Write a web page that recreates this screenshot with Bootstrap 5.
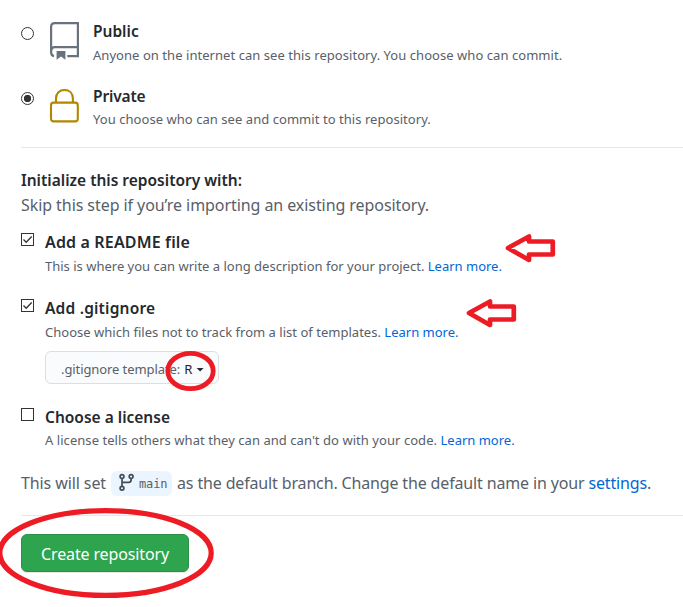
<!DOCTYPE html>
<html lang="en">
<head>
<meta charset="utf-8">
<meta name="viewport" content="width=device-width, initial-scale=1">
<title>Create repository</title>
<link href="https://cdn.jsdelivr.net/npm/bootstrap@5.3.0/dist/css/bootstrap.min.css" rel="stylesheet">
<script src="https://cdn.jsdelivr.net/npm/bootstrap@5.3.0/dist/js/bootstrap.bundle.min.js" defer></script>
<style>
body{font-family:"Noto Sans","Open Sans",sans-serif;font-size:16px;line-height:24px;color:#586069;background:#fff;overflow:hidden;white-space:nowrap}
a{color:#0366d6;text-decoration:none}
.page{padding:19px 0 0 21px;height:607px}
.title{font-weight:600;color:#24292e;font-size:15.5px;line-height:24px}
.note{font-size:13px;line-height:22px;letter-spacing:.05px}
.tight{letter-spacing:0}
.snug{letter-spacing:.02px}
.private{letter-spacing:-.15px}
.choice{height:65px}
.choice .title{height:25px}
.choice + .choice .title{height:24px}
.choice .form-check-input,.opt .form-check-input{width:13px;height:13px;border:1px solid #333;flex:none;background-color:#fff;box-shadow:none}
.choice .form-check-input{margin:8px 15px 0 0}
.form-check-input[type=radio]:checked{background-image:radial-gradient(circle,#333 3.4px,transparent 4px);background-size:100% 100%}
.opt .form-check-input{margin:3px 11px 0 0}
.opt .form-check-input[type=checkbox]{border-radius:0}
.opt .form-check-input:checked{background-image:url("data:image/svg+xml,%3Csvg xmlns='http://www.w3.org/2000/svg' viewBox='0 0 11 11'%3E%3Cpath d='M1.5 5.5l2.7 2.7L9.7 2.5' fill='none' stroke='%23333' stroke-width='1.3'/%3E%3C/svg%3E");background-size:11px 11px}
.picon{width:30px;margin-right:14px;flex:none}
.rule{height:1px;background:#e1e4e8;opacity:.85}
.rule-top{margin-top:-2px}
.rule-bottom{margin:20px 0 18px}
.intro{letter-spacing:-.07px;padding-top:20px;height:82px}
.intro .title{height:25px;letter-spacing:0}
.opt{height:66px}
.opt.tall{height:109px}
.opt .low{padding-top:1px}
.readme{font-size:16px;letter-spacing:.15px}
.ignore{letter-spacing:.2px}
.tpl{width:174px;height:33px;margin-top:8px;padding:4px 0 0 15px;border:1px solid #dcdfe2;border-radius:6px;background:#fafbfc;font-size:13px;line-height:27px;color:#586069;text-align:left;letter-spacing:-.09px}
.caret{width:8px;height:4px;background:#24292e;clip-path:polygon(0 0,100% 0,50% 100%);margin-left:4px}
.branchline{height:24px;letter-spacing:-.15px}
.branch{width:61px;height:25px;background:#eaf5ff;border-radius:6px;margin:0 5px;padding-left:8px}
.branch span{font:12px/26px "DejaVu Sans Mono",monospace;letter-spacing:-.15px;margin-left:5px;padding-top:2px}
.branch svg{margin-top:-2px}
.branchline>:first-child{letter-spacing:-.1px}
.create{width:168px;height:38px;padding:1px 0 0;background:#2ea44f;border:1px solid #2a9147;border-radius:6px;color:#fff;font-size:16px;line-height:37px;letter-spacing:-.13px;box-shadow:0 1px 0 rgba(27,31,35,.1)}
.marks{left:0;top:0;pointer-events:none}
</style>
</head>
<body>
<main class="page position-relative">
  <div class="choice d-flex">
    <input class="form-check-input" type="radio" name="vis" aria-label="Public">
    <svg class="picon" height="44" viewBox="0 0 30 44" fill="none" stroke="#6a737d" stroke-width="2.2"><path d="M5 37.2Q2.1 36.7 2.1 33V8Q2.1 4.2 5.6 4.2H28.9V37.2H18.3M2.1 33Q2.1 28.2 5.8 28.2H28.9"/><path d="M7.6 32H16.4V40.8L12 37.5L7.6 40.8Z" fill="#6a737d" stroke="none"/></svg>
    <div><div class="title">Public</div><div class="note">Anyone on the internet can see this repository. You choose who can commit.</div></div>
  </div>
  <div class="choice d-flex">
    <input class="form-check-input" type="radio" name="vis" aria-label="Private" checked>
    <svg class="picon" height="44" viewBox="0 0 30 44" fill="none" stroke="#b08800" stroke-width="2.1"><rect x="2" y="18.6" width="26.8" height="18.8" rx="2.6"/><path d="M7 18.6V14.5C7 9 10.6 6 15.4 6S23.9 9 23.9 14.5V18.6"/></svg>
    <div><div class="title private">Private</div><div class="note">You choose who can see and commit to this repository.</div></div>
  </div>
  <div class="rule rule-top"></div>
  <div class="intro"><div class="title">Initialize this repository with:</div><div>Skip this step if you’re importing an existing repository.</div></div>
  <div class="opt d-flex">
    <input class="form-check-input" type="checkbox" aria-label="Add a README file" checked>
    <div><div class="title readme">Add a README file</div><div class="note tight low">This is where you can write a long description for your project. <a href="#">Learn more.</a></div></div>
  </div>
  <div class="opt tall d-flex">
    <input class="form-check-input" type="checkbox" aria-label="Add .gitignore" checked>
    <div><div class="title ignore">Add .gitignore</div><div class="note snug low">Choose which files not to track from a list of templates. <a class="tight" href="#">Learn more.</a></div>
      <button class="tpl btn d-flex align-items-center" type="button">.gitignore template:<span class="text-dark ms-1">R</span><span class="caret"></span></button></div>
  </div>
  <div class="opt d-flex">
    <input class="form-check-input" type="checkbox" aria-label="Choose a license">
    <div><div class="title">Choose a license</div><div class="note">A license tells others what they can and can't do with your code. <a class="tight" href="#">Learn more.</a></div></div>
  </div>
  <div class="branchline d-flex align-items-center">
    <span>This will set</span>
    <span class="branch d-inline-flex align-items-center"><svg width="15" height="19" viewBox="0 0 15 19" fill="none" stroke="#444d56" stroke-width="1.7"><circle cx="3" cy="3.6" r="1.9"/><circle cx="12.1" cy="3.6" r="1.9"/><circle cx="3" cy="15.3" r="1.9"/><path d="M3 5.5V13.4M12.1 5.5V7Q12.1 9.3 9.8 9.3H3"/></svg><span>main</span></span>
    <span>as the default branch. Change the default name in your <a href="#">settings</a>.</span>
  </div>
  <div class="rule rule-bottom"></div>
  <button class="create btn d-block" type="button">Create repository</button>
  <svg class="marks position-absolute" width="683" height="607" fill="none" stroke="#ed1c24" stroke-width="4.8">
    <path id="arrow" d="M508 248L529 236.5V241.5H552.8V254.5H529V260Z" stroke-width="4.7" stroke-linejoin="round"/>
    <use href="#arrow" x="-39" y="65"/>
    <ellipse cx="190.5" cy="371" rx="22.7" ry="17.7"/>
    <ellipse cx="105.5" cy="553" rx="105.7" ry="42.4" stroke-width="5.2"/>
  </svg>
</main>
</body>
</html>
